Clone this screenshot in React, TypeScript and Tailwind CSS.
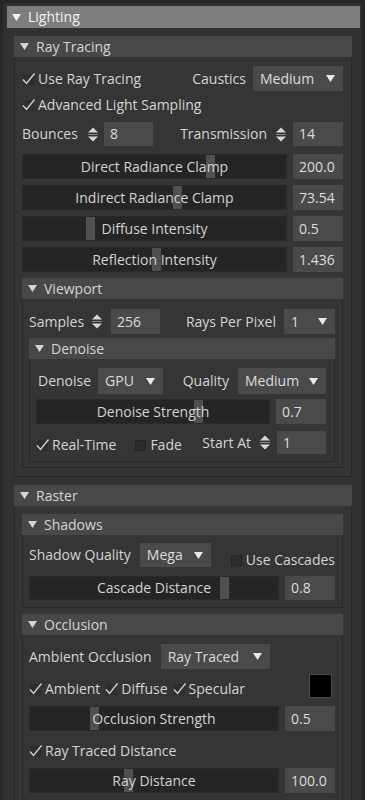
import React from "react";

function Tri({ className = "" }: { className?: string }) {
  return (
    <svg width="9" height="7" viewBox="0 0 9 7" className={className}>
      <path d="M0 0H9L4.5 7Z" fill="currentColor" />
    </svg>
  );
}

function Spin() {
  return (
    <svg width="12" height="17" viewBox="0 0 12 17" className="text-[#d6d6d6]">
      <path d="M1 6.5L6 1.5L11 6.5Z" fill="currentColor" />
      <rect x="1" y="8" width="10" height="1" fill="currentColor" opacity="0.5" />
      <path d="M1 10.5H11L6 15.5Z" fill="currentColor" />
    </svg>
  );
}

function Check({ on = true, label, className = "" }: { on?: boolean; label: string; className?: string }) {
  return (
    <span className={`flex items-center ${className}`}>
      <span className="relative h-[14px] w-[15px] shrink-0">
        {on ? (
          <svg width="15" height="14" viewBox="0 0 15 14" className="absolute left-0 top-0">
            <rect x="1" y="2" width="11" height="11" fill="#2e2e2e" />
            <path d="M1 7.5L4.5 11.5L12.5 1.5" stroke="#cfcfcf" strokeWidth="1.4" fill="none" />
          </svg>
        ) : (
          <span className="absolute left-[1px] top-[2px] h-[11px] w-[11px] border border-[#242424] bg-[#2c2c2c]" />
        )}
      </span>
      <span className="ml-[1px] whitespace-nowrap">{label}</span>
    </span>
  );
}

function Drop({ value, className = "" }: { value: string; className?: string }) {
  return (
    <div className={`flex h-full items-center justify-between bg-[#4a4a4a] pl-[7px] pr-[8px] text-[#dcdcdc] ${className}`}>
      <span>{value}</span>
      <Tri className="text-[#e8e8e8]" />
    </div>
  );
}

function Field({ value, className = "" }: { value: string; className?: string }) {
  return <div className={`flex h-full items-center bg-[#4a4a4a] pl-[6px] text-[#dcdcdc] ${className}`}>{value}</div>;
}

function Slider({ label, value, pos, className = "" }: { label: string; value: string; pos: number; className?: string }) {
  return (
    <div className={`flex gap-[6px] ${className}`}>
      <div className="relative flex flex-1 items-center justify-center border border-[#2a2a2a] bg-[#252525]">
        <div className="absolute top-0 bottom-0 w-[9px] bg-[#505050]" style={{ left: `${pos}%` }} />
        <span className="relative text-[#d2d2d2]">{label}</span>
      </div>
      <Field value={value} className="w-[50px]" />
    </div>
  );
}

function Section({
  title,
  children,
  className = "",
  bodyClass = "",
}: {
  title: string;
  children: React.ReactNode;
  className?: string;
  bodyClass?: string;
}) {
  return (
    <div className={className}>
      <div className="flex h-[21px] items-center gap-[7px] bg-[#484848] pl-[6px] text-[#d4d4d4]">
        <Tri />
        <span>{title}</span>
      </div>
      <div className={`border border-t-0 border-[#282828] bg-[#353535] ${bodyClass}`}>{children}</div>
    </div>
  );
}

export default function App() {
  return (
    <div className="h-[800px] w-[365px] overflow-hidden bg-[#262626] pl-[3px] pr-[3px] pt-[3px] font-['Open_Sans',sans-serif] text-[14px] leading-none text-[#d4d4d4]">
      <div className="h-full bg-[#303030] pl-[4px] pr-[2px] pt-[3px]">
        <div className="flex h-[22px] items-center gap-[7px] bg-[#7d7d7d] pl-[5px] text-[#f2f2f2]">
          <Tri />
          <span>Lighting</span>
        </div>
        <div className="bg-[#323232] pl-[7px] pr-[8px] pt-[8px]">
          <Section title="Ray Tracing" bodyClass="pl-[7px] pr-[8px] pt-[9px] pb-[8px]">
            <div className="flex h-[25px] items-center justify-between">
              <Check label="Use Ray Tracing" />
              <div className="flex h-full items-center gap-[7px]">
                <span>Caustics</span>
                <Drop value="Medium" className="w-[90px]" />
              </div>
            </div>
            <div className="mt-[1px] flex h-[25px] items-center">
              <Check label="Advanced Light Sampling" />
            </div>
            <div className="mt-[5px] flex h-[24px] items-center justify-between">
              <div className="flex h-full items-center">
                <span>Bounces</span>
                <span className="ml-[9px]"><Spin /></span>
                <Field value="8" className="ml-[5px] w-[49px]" />
              </div>
              <div className="flex h-full items-center">
                <span>Transmission</span>
                <span className="ml-[8px]"><Spin /></span>
                <Field value="14" className="ml-[6px] w-[50px]" />
              </div>
            </div>
            <Slider className="mt-[8px] h-[25px]" label="Direct Radiance Clamp" value="200.0" pos={69.5} />
            <Slider className="mt-[6px] h-[25px]" label="Indirect Radiance Clamp" value="73.54" pos={57} />
            <Slider className="mt-[6px] h-[25px]" label="Diffuse Intensity" value="0.5" pos={24} />
            <Slider className="mt-[6px] h-[25px]" label="Reflection Intensity" value="1.436" pos={49} />

            <Section title="Viewport" className="mt-[6px]" bodyClass="pl-[6px] pr-[7px] pt-[10px] pb-[5px]">
              <div className="flex h-[25px] items-center justify-between">
                <div className="flex h-full items-center">
                  <span>Samples</span>
                  <span className="ml-[7px]"><Spin /></span>
                  <Field value="256" className="ml-[8px] w-[49px]" />
                </div>
                <div className="flex h-full items-center gap-[8px]">
                  <span>Rays Per Pixel</span>
                  <Drop value="1" className="w-[51px]" />
                </div>
              </div>

              <Section title="Denoise" className="mt-[4px]" bodyClass="pl-[6px] pr-[8px] pt-[9px] pb-[7px]">
                <div className="flex h-[26px] items-center justify-between">
                  <div className="flex h-full items-center gap-[7px]">
                    <span className="pl-[2px]">Denoise</span>
                    <Drop value="GPU" className="w-[65px]" />
                  </div>
                  <div className="flex h-full items-center gap-[9px]">
                    <span>Quality</span>
                    <Drop value="Medium" className="w-[88px]" />
                  </div>
                </div>
                <Slider className="mt-[5px] h-[25px]" label="Denoise Strength" value="0.7" pos={67.7} />
                <div className="mt-[7px] flex h-[23px] items-center">
                  <Check label="Real-Time" className="mt-[4px]" />
                  <Check on={false} label="Fade" className="ml-[18px] mt-[4px]" />
                  <div className="ml-auto flex h-full items-center">
                    <span>Start At</span>
                    <span className="ml-[8px]"><Spin /></span>
                    <Field value="1" className="ml-[6px] w-[49px]" />
                  </div>
                </div>
              </Section>
            </Section>
          </Section>

          <Section title="Raster" className="mt-[8px]" bodyClass="pl-[7px] pr-[8px] pt-[8px] pb-[8px]">
            <Section title="Shadows" bodyClass="pl-[6px] pr-[7px] pt-[8px] pb-[7px]">
              <div className="flex h-[24px] items-center justify-between">
                <div className="flex h-full items-center gap-[9px]">
                  <span>Shadow Quality</span>
                  <Drop value="Mega" className="w-[71px]" />
                </div>
                <Check on={false} label="Use Cascades" className="mt-[10px]" />
              </div>
              <Slider className="mt-[9px] h-[24px]" label="Cascade Distance" value="0.8" pos={76.5} />
            </Section>

            <Section title="Occlusion" className="mt-[6px]" bodyClass="pl-[6px] pr-[7px] pt-[9px] pb-[8px]">
              <div className="flex h-[25px] items-center gap-[9px]">
                <span>Ambient Occlusion</span>
                <Drop value="Ray Traced" className="w-[109px]" />
              </div>
              <div className="mt-[5px] flex h-[24px] items-center">
                <div className="flex items-center gap-[5px] pt-[6px]">
                  <Check label="Ambient" />
                  <Check label="Diffuse" />
                  <Check label="Specular" />
                </div>
                <div className="ml-auto mr-[3px] h-[24px] w-[23px] border border-[#4a4a4a] bg-black" />
              </div>
              <Slider className="mt-[8px] h-[25px]" label="Occlusion Strength" value="0.5" pos={24} />
              <div className="mt-[8px] flex h-[24px] items-center">
                <Check label="Ray Traced Distance" />
              </div>
              <Slider className="mt-[5px] h-[25px]" label="Ray Distance" value="100.0" pos={38} />
            </Section>
          </Section>
        </div>
      </div>
    </div>
  );
}
